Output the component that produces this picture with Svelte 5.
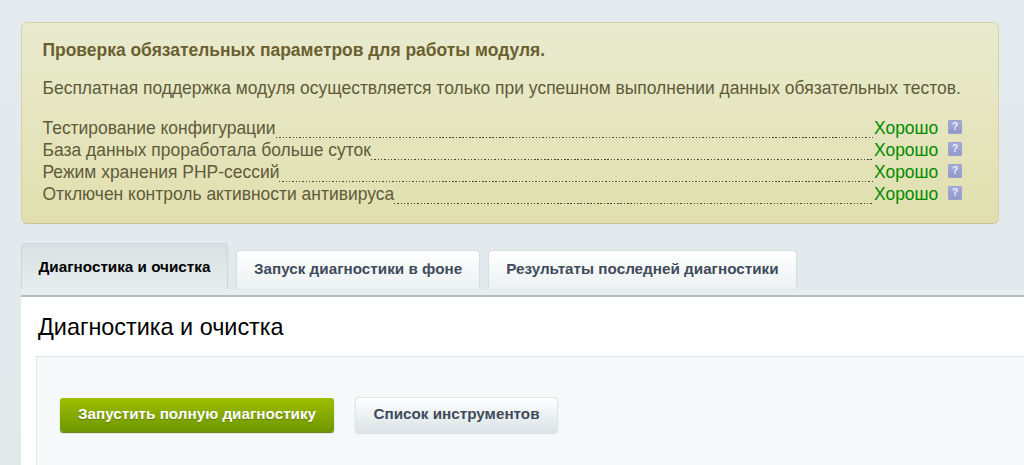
<script>
  const checks = [
    'Тестирование конфигурации',
    'База данных проработала больше суток',
    'Режим хранения PHP-сессий',
    'Отключен контроль активности антивируса'
  ];
  const tabs = [
    { label: 'Диагностика и очистка', active: true },
    { label: 'Запуск диагностики в фоне' },
    { label: 'Результаты последней диагностики' }
  ];
</script>

<div class="page">
  <section class="notice">
    <h2>Проверка обязательных параметров для работы модуля.</h2>
    <p>Бесплатная поддержка модуля осуществляется только при успешном выполнении данных обязательных тестов.</p>
    <ul>
      {#each checks as check}
        <li>
          <span class="name">{check}</span>
          <span class="dots"></span>
          <span class="ok">Хорошо</span>
          <span class="help">?</span>
        </li>
      {/each}
    </ul>
  </section>

  <nav class="tabs">
    {#each tabs as tab}
      <button type="button" class="tab" class:active={tab.active}>{tab.label}</button>
    {/each}
  </nav>
  <div class="tabs-line"></div>

  <main class="content">
    <h1>Диагностика и очистка</h1>
    <div class="box">
      <button type="button" class="btn btn-green">Запустить полную диагностику</button>
      <button type="button" class="btn btn-gray">Список инструментов</button>
    </div>
  </main>
</div>

<style>
  :global(body) {
    margin: 0;
    overflow: hidden;
    background: #e4ebee;
  }

  .page {
    height: 465px;
    overflow: hidden;
    padding: 22px 0 0 21px;
    box-sizing: border-box;
    background: linear-gradient(to bottom, #e3ebee, #e2e9eb);
    font-family: "Liberation Sans", Arial, sans-serif;
  }

  .notice {
    width: 978px;
    height: 202px;
    box-sizing: border-box;
    padding: 18px 36px 0 20.5px;
    border: 1px solid #d6d0a6;
    border-bottom-color: #c9c394;
    border-radius: 6px;
    background: linear-gradient(to bottom, #e9ebcf, #e1dfae);
    color: #5f5b3a;
  }

  h2 {
    margin: 0;
    font-size: 17.45px;
    line-height: 19px;
    font-weight: bold;
    color: #6a5f30;
  }

  p {
    margin: 19px 0 0;
    font-size: 17.47px;
    line-height: 19px;
  }

  ul {
    margin: 19px 0 0;
    padding: 0;
    list-style: none;
  }

  li {
    display: flex;
    align-items: flex-end;
    height: 22px;
    font-size: 17.47px;
    line-height: 22px;
  }

  .dots {
    flex: 1;
    height: 1px;
    margin-bottom: 1px;
    background: repeating-linear-gradient(to right, #4a4736 0 1.4px, transparent 1.4px 3.33px);
  }

  .ok {
    color: #008a00;
    width: 74px;
  }

  .help {
    align-self: center;
    width: 14px;
    height: 14px;
    margin-bottom: 2px;
    border-radius: 2px;
    background: linear-gradient(to bottom, #a7aedb, #8f97c8);
    box-shadow: inset 0 0 0 1px #9aa1cd;
    color: #eef0fa;
    font-size: 10px;
    line-height: 14px;
    font-weight: bold;
    text-align: center;
  }

  .tabs {
    display: flex;
    align-items: flex-end;
    gap: 8px;
    height: 46px;
    margin-top: 19px;
  }

  .tab {
    height: 39px;
    padding: 0 17px 3px;
    border: 1px solid #d5dde0;
    border-bottom: 0;
    border-radius: 4px 4px 0 0;
    background: linear-gradient(to bottom, #ffffff, #ecf1f2);
    color: #3f4b5b;
    font: bold 15.25px "Liberation Sans", Arial, sans-serif;
  }

  .tab.active {
    height: 46px;
    padding: 0 16.5px 1px;
    border-color: #cdd6d8;
    background: linear-gradient(to bottom, #d8e0e2, #e6edee);
    color: #000;
  }

  .tabs-line {
    height: 6px;
    border-bottom: 2px solid #b4bcbe;
    background: #e8eef0;
  }

  .content {
    background: #fff;
    height: 170px;
    padding: 0 0 0 15px;
  }

  h1 {
    margin: 0;
    padding: 17px 0 0 2px;
    height: 42px;
    font-size: 23.4px;
    line-height: 26px;
    font-weight: normal;
    color: #000;
  }

  .box {
    display: flex;
    gap: 22px;
    padding: 41px 0 0 23px;
    height: 120px;
    border-top: 1px solid #dce3e6;
    border-left: 1px solid #e4eaec;
    background: #f5f9f9;
  }

  .btn {
    height: 34px;
    padding: 0 0 3px;
    border: 0;
    border-radius: 3px;
    font: bold 15.25px "Liberation Sans", Arial, sans-serif;
  }

  .btn-green {
    width: 274px;
    background: linear-gradient(to bottom, #a0bd00, #6e9700);
    box-shadow: 0 1px 1px #5d7f10;
    color: #fff;
    text-shadow: 0 1px 1px #5a7a00;
  }

  .btn-gray {
    width: 201px;
    background: linear-gradient(to bottom, #ffffff, #dbe3e6);
    box-shadow: 0 0 0 1px #e2e6e7, 0 1px 2px #9aa3a6;
    color: #3f4b5b;
  }
</style>
